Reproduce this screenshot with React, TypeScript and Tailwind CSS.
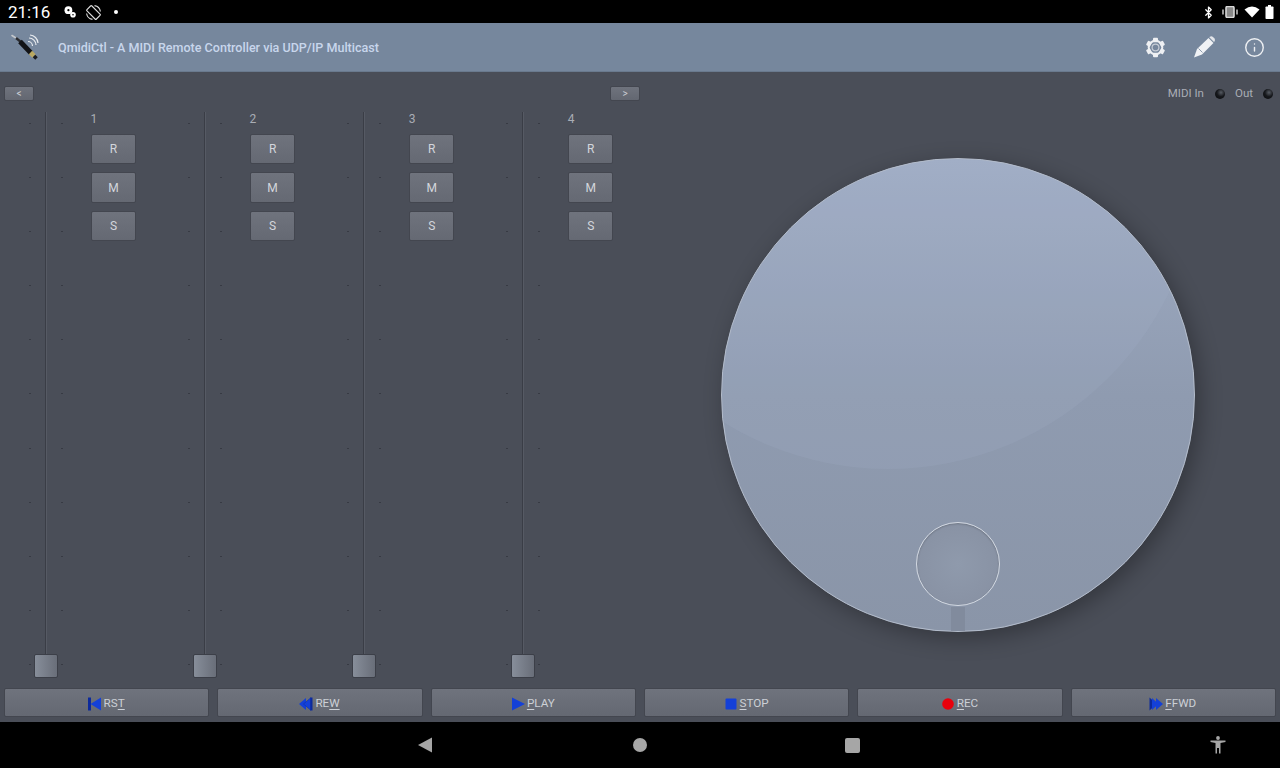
import { Bluetooth, Info } from 'lucide-react'

const tickRows = [0, 1, 2, 3, 4, 5, 6, 7, 8, 9, 10]
const gearTeeth = [0, 60, 120, 180, 240, 300]

function TickColumn() {
  return (
    <div className="flex h-full w-[2px] flex-col justify-between pt-[11px] pb-[13px]">
      {tickRows.map((row) => (
        <div key={row} className="h-px w-[2px] bg-[#373a43]" />
      ))}
    </div>
  )
}

function SmallButton({ label }: { label: string }) {
  return (
    <button className="flex h-[30.4px] w-[45px] items-center justify-center rounded-[2px] border border-[#43464f] bg-linear-to-b from-[#6f737d] to-[#656973] text-[12px] text-[#d3d6dc]">
      {label}
    </button>
  )
}

function Strip({ num }: { num: number }) {
  return (
    <div className="flex w-[159.1px] shrink-0">
      <div className="relative h-[566px] w-[92px] shrink-0">
        <div className="flex h-full justify-center gap-[14px]">
          <TickColumn />
          <div className="h-full w-[2px] border-r border-[#565a64] bg-[#3a3d46]" />
          <TickColumn />
        </div>
        <div className="absolute top-[542px] left-[34px] size-[24px] rounded-[2px] border border-[#3c3f48] bg-linear-to-r from-[#878e9a] to-[#696e79]" />
      </div>
      <div className="-ml-[1px] flex w-[45px] flex-col">
        <div className="-ml-[0.5px] h-[22px] text-[12px] leading-[14px] text-[#a9adb5]">{num}</div>
        <div className="flex flex-col gap-2">
          <SmallButton label="R" />
          <SmallButton label="M" />
          <SmallButton label="S" />
        </div>
      </div>
    </div>
  )
}

function PageButton({ label }: { label: string }) {
  return (
    <button className="flex h-[15px] w-[30px] items-center justify-center rounded-[2px] border border-[#43464f] bg-linear-to-b from-[#6f737d] to-[#636771] text-[10px] leading-none text-[#c9ccd2]">
      {label}
    </button>
  )
}

function Led() {
  return <div className="size-[10px] rounded-full bg-[radial-gradient(circle_at_60%_35%,#565b63_0%,#17191d_45%,#060709_100%)]" />
}

function TransportIcon({ kind }: { kind: string }) {
  const blue = '#1440d8'
  const dark = '#0c2a9c'
  return (
    <svg width="16" height="16" viewBox="0 0 16 16" className="shrink-0">
      {kind === 'rst' && (
        <>
          <rect x="1" y="1.5" width="3" height="13" fill={dark} />
          <path d="M14 1.5 V14.5 L3.5 8 Z" fill={blue} />
        </>
      )}
      {kind === 'rew' && (
        <>
          <rect x="12" y="1.5" width="2.5" height="13" fill={dark} />
          <path d="M8 2 V14 L1 8 Z" fill={blue} />
          <path d="M12.5 2 V14 L5.5 8 Z" fill={blue} stroke={dark} strokeWidth="0.5" />
        </>
      )}
      {kind === 'play' && <path d="M2 1.5 L15 8 L2 14.5 Z" fill={blue} />}
      {kind === 'stop' && <rect x="2.5" y="2.5" width="11" height="11" rx="1" fill={blue} />}
      {kind === 'rec' && <circle cx="8" cy="8" r="5.8" fill="#e8000c" />}
      {kind === 'ffwd' && (
        <>
          <path d="M1.5 1.5 V14.5 L8.5 8 Z" fill={dark} />
          <path d="M4 2 V14 L10.5 8 Z" fill={blue} />
          <path d="M8 2 V14 L15 8 Z" fill={blue} />
        </>
      )}
    </svg>
  )
}

function TransportButton({ kind, before, mark, after }: { kind: string; before: string; mark: string; after: string }) {
  return (
    <button className="flex h-[29px] flex-1 items-center justify-center gap-[1px] rounded-[2px] border border-[#43464f] bg-linear-to-b from-[#6f737d] to-[#646872] pt-[2px] pr-[2px] text-[11.7px] text-[#ccd0d6]">
      <TransportIcon kind={kind} />
      <span>
        {before}
        <span className="underline underline-offset-2">{mark}</span>
        {after}
      </span>
    </button>
  )
}

function AppLogo() {
  return (
    <svg width="28" height="28" viewBox="0 0 28 28" className="shrink-0">
      <path d="M1 2.5 L8 7" stroke="#c4c7cb" strokeWidth="1.6" strokeLinecap="round" />
      <path d="M5 5 L10 9" stroke="#2a2b2f" strokeWidth="2.4" />
      <path d="M9 8.5 L20 20" stroke="#121316" strokeWidth="5" />
      <path d="M19.5 19.5 L23 23" stroke="#b9a861" strokeWidth="4.6" />
      <path d="M23 23 L25.5 25.5" stroke="#1a1b1e" strokeWidth="3.6" />
      <path d="M17 8.5 A4.5 4.5 0 0 1 21.5 13 M18 5 A7 7 0 0 1 25 12 M19 2 A8.5 8.5 0 0 1 27 10" fill="none" stroke="#e8ebef" strokeWidth="1.2" />
    </svg>
  )
}

function GearIcon() {
  return (
    <svg width="21" height="21" viewBox="0 0 21 21">
      {gearTeeth.map((angle) => (
        <rect key={angle} x="8" y="0.8" width="5" height="4.4" rx="1" fill="#eef0f3" transform={`rotate(${angle} 10.5 10.5)`} />
      ))}
      <circle cx="10.5" cy="10.5" r="6.8" fill="none" stroke="#eef0f3" strokeWidth="2" />
      <circle cx="10.5" cy="10.5" r="3.4" fill="none" stroke="#c6ccd5" strokeWidth="1.2" />
    </svg>
  )
}

function PencilIcon() {
  return (
    <svg width="24" height="24" viewBox="0 0 24 24">
      <path d="M2 22.5 L5 14 L16.5 3 L21.5 8 L10 19.5 Z" fill="#f0f2f5" />
      <path d="M17.8 1.8 Q19.5 0.5 21 2 L22.5 3.5 Q23.5 5 22.5 6.5 L22 7 L17.3 2.3 Z" fill="#e2e5ea" />
      <path d="M6.5 13.5 L10.5 17.5" stroke="#76879d" strokeWidth="0.8" />
    </svg>
  )
}

function StatusIcons() {
  return (
    <div className="flex items-center pt-px">
      <Bluetooth size={13} strokeWidth={2.4} className="text-white" />
      <svg width="16" height="12" viewBox="0 0 16 12" className="ml-[7px]">
        <rect x="4" y="0.5" width="8" height="11" rx="1.5" fill="#8a8a8a" stroke="#d8d8d8" strokeWidth="1.6" />
        <path d="M1 3.5 V8.5 M15 3.5 V8.5" stroke="#d8d8d8" strokeWidth="1.4" />
      </svg>
      <svg width="16" height="12" viewBox="0 0 16 12" className="ml-[6px]">
        <path d="M0.5 3.5 Q8 -2.5 15.5 3.5 L8 11.5 Z" fill="#fff" />
      </svg>
      <svg width="9" height="14" viewBox="0 0 9 14" className="ml-[5px]">
        <rect x="0.5" y="1.5" width="8" height="12.5" rx="0.8" fill="#fff" />
        <rect x="3" y="0" width="3" height="2" fill="#fff" />
      </svg>
    </div>
  )
}

function NotificationIcons() {
  return (
    <div className="flex items-center">
      <svg width="12" height="12" viewBox="0 0 12 12" className="ml-[14px]">
        <circle cx="4.4" cy="4.2" r="3.9" fill="#fff" />
        <circle cx="4.4" cy="4.2" r="1.1" fill="#000" />
        <circle cx="9" cy="8.8" r="2.8" fill="#fff" />
        <circle cx="9" cy="8.8" r="0.8" fill="#000" />
      </svg>
      <svg width="15" height="15" viewBox="0 0 15 15" className="ml-[10px]">
        <rect x="4" y="0.8" width="7" height="13.4" rx="1" transform="rotate(-45 7.5 7.5)" fill="none" stroke="#e0e0e0" strokeWidth="1.1" />
        <path d="M8.5 0.6 A7 7 0 0 1 14.4 6.5 M0.6 8.5 A7 7 0 0 0 6.5 14.4" fill="none" stroke="#e0e0e0" strokeWidth="1.1" />
      </svg>
      <div className="ml-[13px] size-[4px] rounded-full bg-white" />
    </div>
  )
}

function Knob() {
  return (
    <div className="relative size-[474px] rounded-full shadow-[5px_6px_22px_rgba(0,0,0,0.3)]">
      <div className="absolute inset-0 overflow-hidden rounded-full border border-[#b4bdcc] bg-linear-to-b from-[#a0adc5] via-[#8f9bb0] to-[#8a95a8]">
        <div className="absolute top-[-314px] left-[-146px] size-[624px] rounded-full bg-[#a7b4cf]/16" />
        <div className="absolute top-[448px] left-[229px] h-[26px] w-[14px] bg-[#818b9d]" />
        <div className="absolute top-[363px] left-[194px] size-[84px] rounded-full border border-[#d3d9e2] bg-[radial-gradient(circle,#8f9aac_0%,#868fa1_100%)] shadow-[inset_0_1px_2px_rgba(0,0,0,0.2)]" />
      </div>
    </div>
  )
}

export default function App() {
  return (
    <div className="flex h-[768px] w-[1280px] flex-col overflow-hidden bg-black font-['Roboto',sans-serif]">
      <div className="flex h-[23px] shrink-0 items-center justify-between pr-[6px] pl-[8px]">
        <div className="flex items-center pt-px">
          <span className="text-[17px] leading-none text-white">21:16</span>
          <NotificationIcons />
        </div>
        <StatusIcons />
      </div>

      <div className="flex h-[49px] shrink-0 items-center border-b border-[#6a7a8e] bg-[#76879d] pr-[15px] pl-[11px]">
        <AppLogo />
        <span className="ml-[19px] pt-[3px] text-[12.55px] font-medium text-[#c8d6ec]">QmidiCtl - A MIDI Remote Controller via UDP/IP Multicast</span>
        <div className="ml-auto flex items-center">
          <GearIcon />
          <div className="ml-[26px]">
            <PencilIcon />
          </div>
          <Info size={21} strokeWidth={1.6} className="ml-[28px] text-[#eef0f3]" />
        </div>
      </div>

      <div className="flex h-[650px] shrink-0 flex-col bg-[#4a4e58]">
        <div className="flex h-[606px] pt-[14px]">
          <div className="w-[640px] shrink-0">
            <div className="flex h-[15px] justify-between pl-[4px]">
              <PageButton label="<" />
              <PageButton label=">" />
            </div>
            <div className="mt-[11px] flex">
              <Strip num={1} />
              <Strip num={2} />
              <Strip num={3} />
              <Strip num={4} />
            </div>
          </div>
          <div className="flex-1">
            <div className="flex h-[15px] items-center justify-end gap-[10px] pr-[7px] text-[11.5px] text-[#a9adb5]">
              <span className="mr-[1px]">MIDI In</span>
              <Led />
              <span>Out</span>
              <Led />
            </div>
            <div className="mt-[57px] ml-[81px]">
              <Knob />
            </div>
          </div>
        </div>
        <div className="mt-[10px] flex gap-2 px-1">
          <TransportButton kind="rst" before="RS" mark="T" after="" />
          <TransportButton kind="rew" before="RE" mark="W" after="" />
          <TransportButton kind="play" before="" mark="P" after="LAY" />
          <TransportButton kind="stop" before="" mark="S" after="TOP" />
          <TransportButton kind="rec" before="" mark="R" after="EC" />
          <TransportButton kind="ffwd" before="" mark="F" after="FWD" />
        </div>
      </div>

      <div className="relative flex h-[46px] shrink-0 items-center">
        <svg width="16" height="16" viewBox="0 0 16 16" className="ml-[417px]">
          <path d="M15 0.5 V15.5 L1 8 Z" fill="#a6a6a6" />
        </svg>
        <div className="ml-[200px] size-[14px] rounded-full bg-[#a6a6a6]" />
        <div className="ml-[198px] size-[15px] rounded-[2px] bg-[#a6a6a6]" />
        <svg width="16" height="18" viewBox="0 0 16 18" className="ml-[350px]">
          <circle cx="8" cy="2" r="1.9" fill="#a6a6a6" />
          <path d="M0.5 4.5 H15.5 V6 L10.5 7 V17.5 H9 V12 H7 V17.5 H5.5 V7 L0.5 6 Z" fill="#a6a6a6" />
        </svg>
      </div>
    </div>
  )
}
